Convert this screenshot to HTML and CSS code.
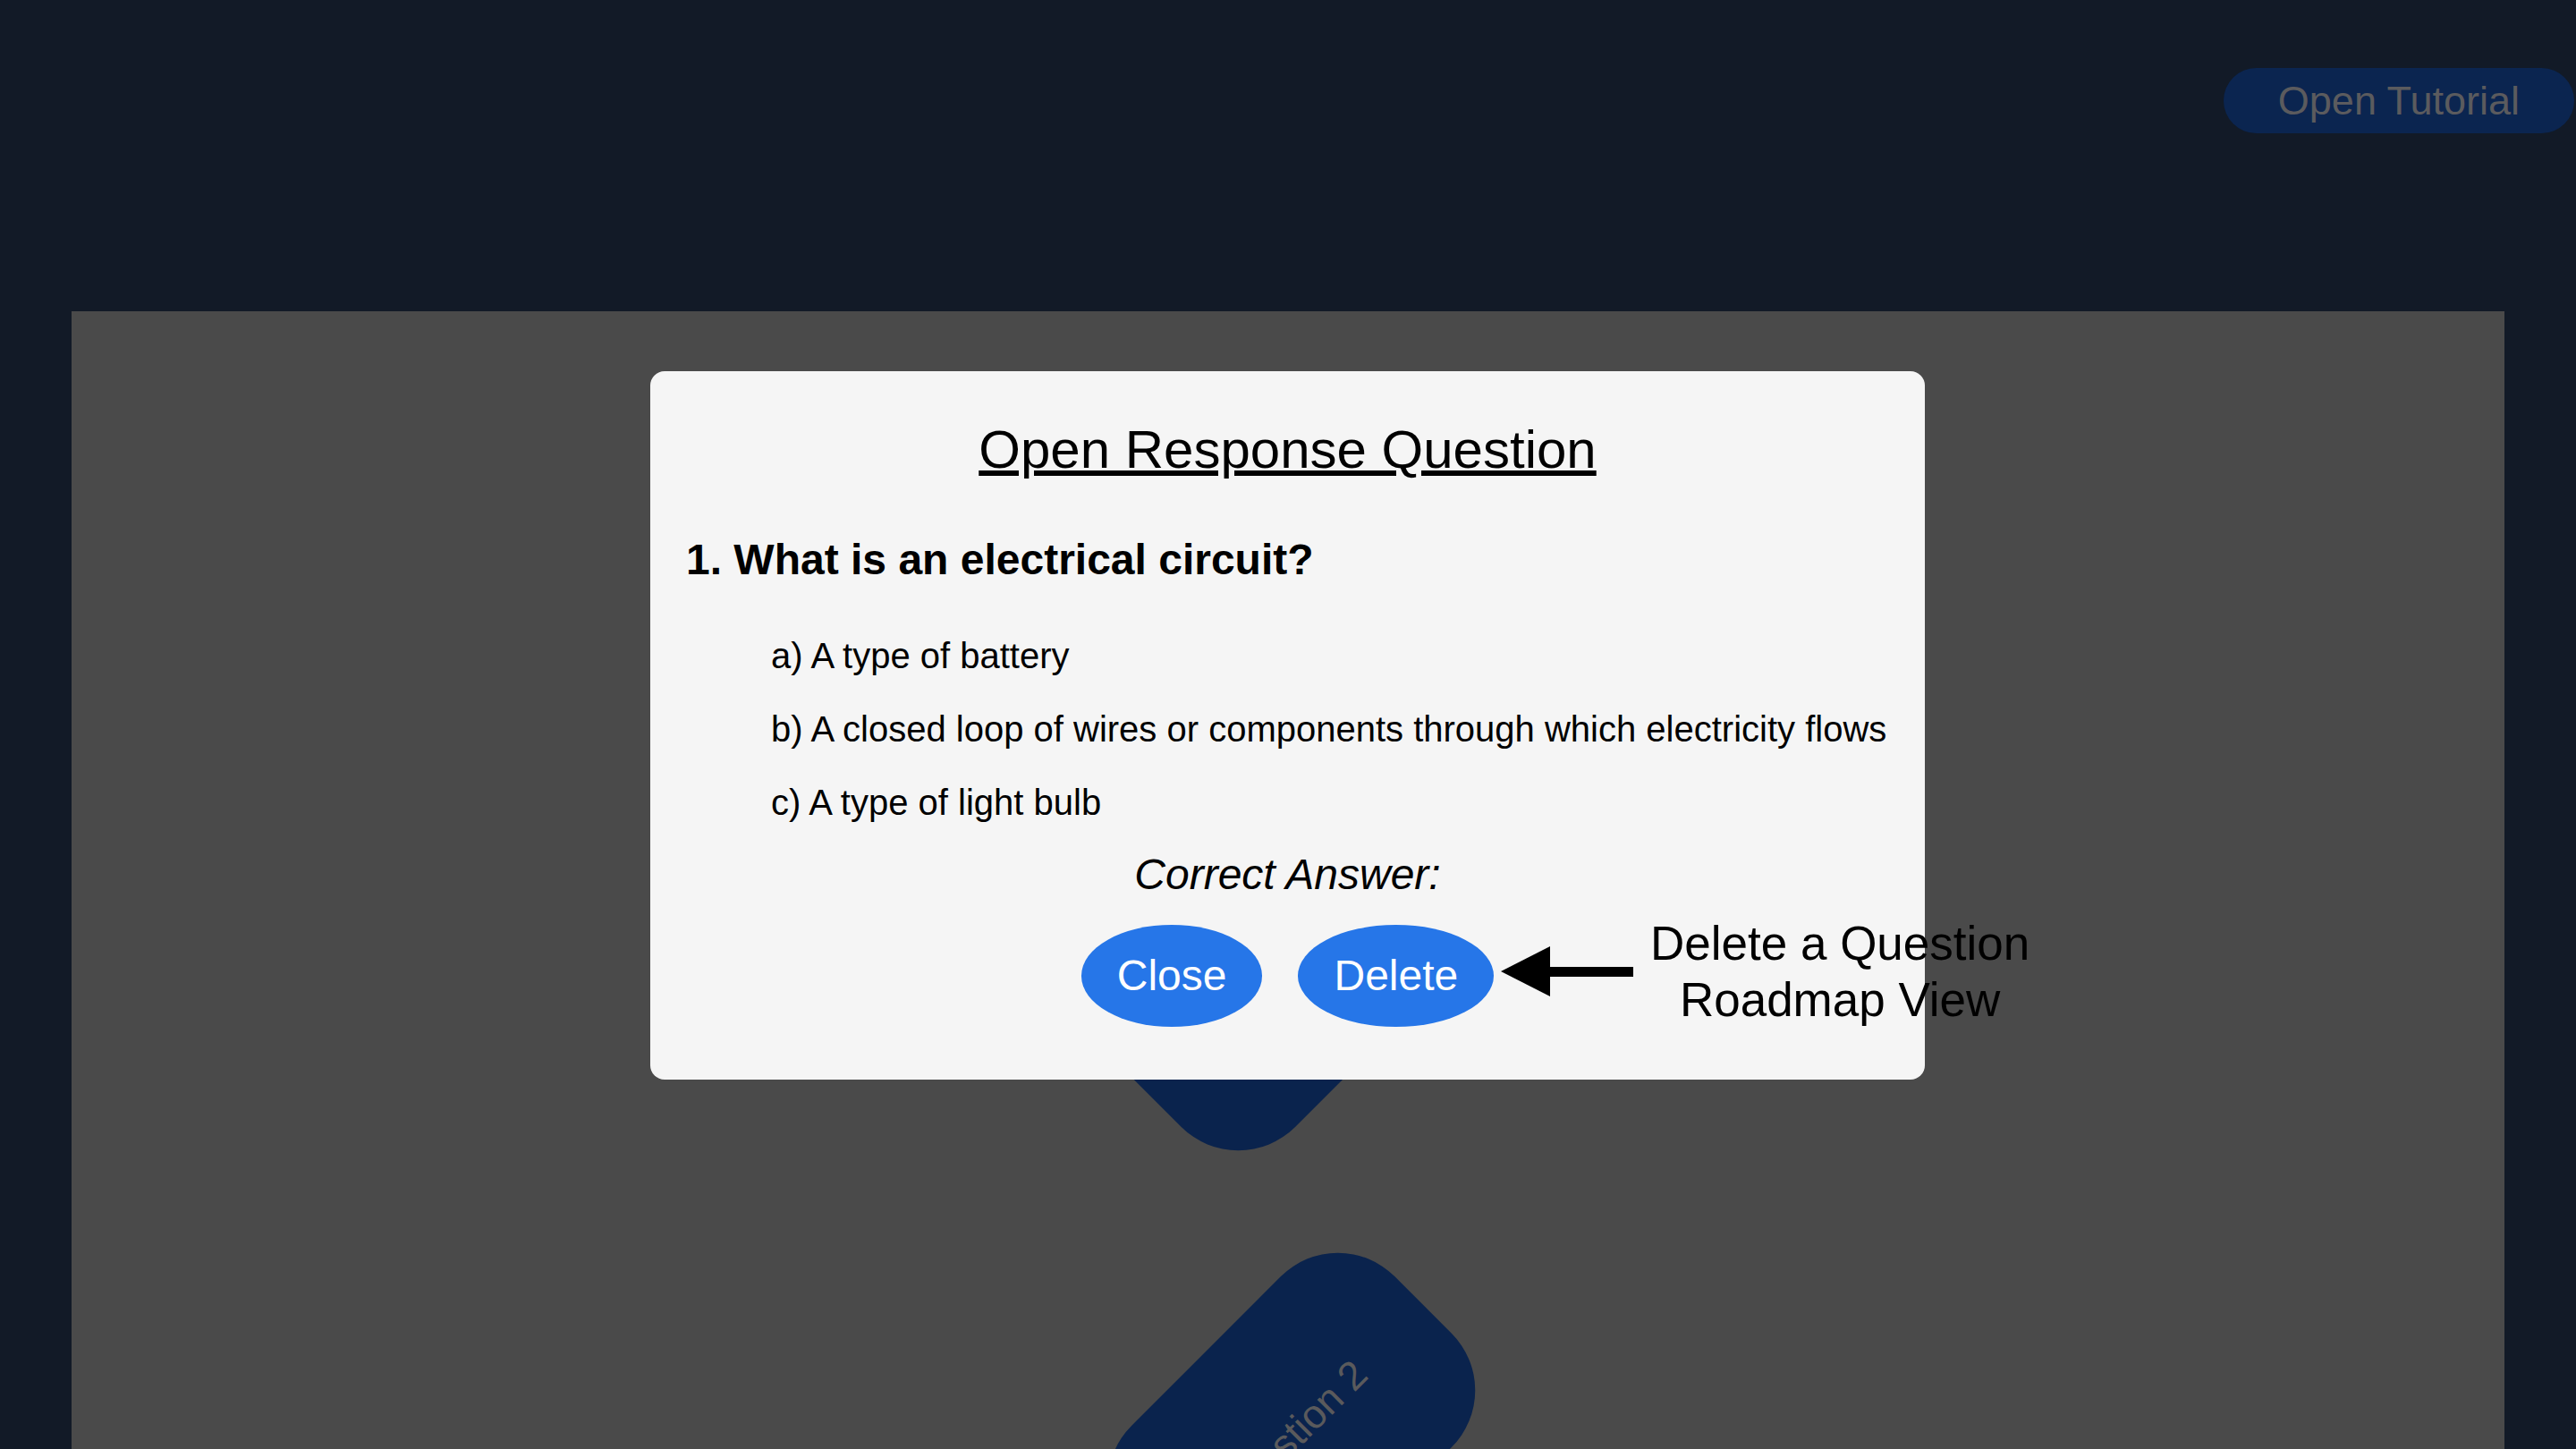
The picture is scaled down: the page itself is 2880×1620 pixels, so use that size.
FILE: index.html
```html
<!DOCTYPE html>
<html lang="en">
<head>
<meta charset="utf-8">
<title>Roadmap View</title>
<link rel="stylesheet" href="styles.css">
</head>
<body>
<header class="topbar">
  <button class="tutorial-btn">Open Tutorial</button>
</header>
<main class="panel">
  <div class="node node-1"><span>Question 1</span></div>
  <div class="node node-2"><span>Question 2</span></div>
</main>

<section class="modal">
  <h2 class="modal-title">Open Response Question</h2>
  <p class="question">1. What is an electrical circuit?</p>
  <ul class="options">
    <li>a) A type of battery</li>
    <li>b) A closed loop of wires or components through which electricity flows</li>
    <li>c) A type of light bulb</li>
  </ul>
  <p class="correct">Correct Answer:</p>
  <div class="actions">
    <button class="pill">Close</button>
    <button class="pill">Delete</button>
  </div>
</section>

<div class="annotation">
  <svg class="arrow" width="148" height="56" viewBox="0 0 148 56">
    <polygon points="0,28 55,0 55,56" fill="#000"/>
    <rect x="54" y="23" width="94" height="11" fill="#000"/>
  </svg>
  <div class="note">Delete a Question<br>Roadmap View</div>
</div>
</body>
</html>
```

FILE: styles.css
```css
* { box-sizing: border-box; }

html, body {
  margin: 0;
  padding: 0;
  height: 100%;
}

body {
  background: #121a27;
  font-family: "Liberation Sans", Arial, Helvetica, sans-serif;
  overflow: hidden;
  position: relative;
}

.topbar {
  height: 348px;
  display: flex;
  justify-content: flex-end;
  align-items: flex-start;
  padding-top: 76px;
  padding-right: 2px;
}

.tutorial-btn {
  border: none;
  background: #0b2550;
  color: #5b5b5e;
  font-family: inherit;
  font-size: 45px;
  height: 73px;
  line-height: 73px;
  padding: 0 61px;
  border-radius: 37px;
}

.panel {
  position: relative;
  margin: 0 80px;
  height: calc(100vh - 348px);
  background: #4a4a4a;
  overflow: hidden;
}

.node {
  position: absolute;
  width: 416px;
  height: 270px;
  border-radius: 90px;
  background: #0a234d;
  transform: rotate(-45deg);
  display: flex;
  align-items: center;
  justify-content: center;
  color: #5a5a5c;
  font-size: 45px;
}

.node-1 { left: 1148px; top: 598px; }
.node-2 { left: 1156px; top: 1123px; }

.modal {
  position: absolute;
  left: 727px;
  top: 415px;
  width: 1425px;
  background: #f5f5f5;
  border-radius: 16px;
  padding: 53px 40px 59px;
  color: #000;
}

.modal-title {
  margin: 0;
  font-size: 60px;
  font-weight: normal;
  line-height: 69px;
  text-align: center;
  text-decoration: underline;
}

.question {
  margin: 61px 0 0;
  font-size: 48px;
  font-weight: bold;
  line-height: 55px;
}

.options {
  list-style: none;
  margin: 57px 0 0;
  padding: 0 0 0 95px;
  display: flex;
  flex-direction: column;
  gap: 36px;
  font-size: 40px;
  line-height: 46px;
}

.correct {
  margin: 30px 0 0;
  font-size: 48px;
  font-style: italic;
  line-height: 55px;
  text-align: center;
}

.actions {
  margin-top: 29px;
  display: flex;
  justify-content: center;
  gap: 40px;
}

.pill {
  border: none;
  background: #2676e8;
  color: #fff;
  font-family: inherit;
  font-size: 48px;
  line-height: 54px;
  padding: 30px 40px;
  border-radius: 50%;
}

.annotation {
  position: absolute;
  left: 1678px;
  top: 1023px;
  display: flex;
  align-items: center;
  gap: 19px;
}

.arrow { display: block; }

.note {
  font-size: 53px;
  line-height: 63px;
  text-align: center;
  color: #000;
}
```
